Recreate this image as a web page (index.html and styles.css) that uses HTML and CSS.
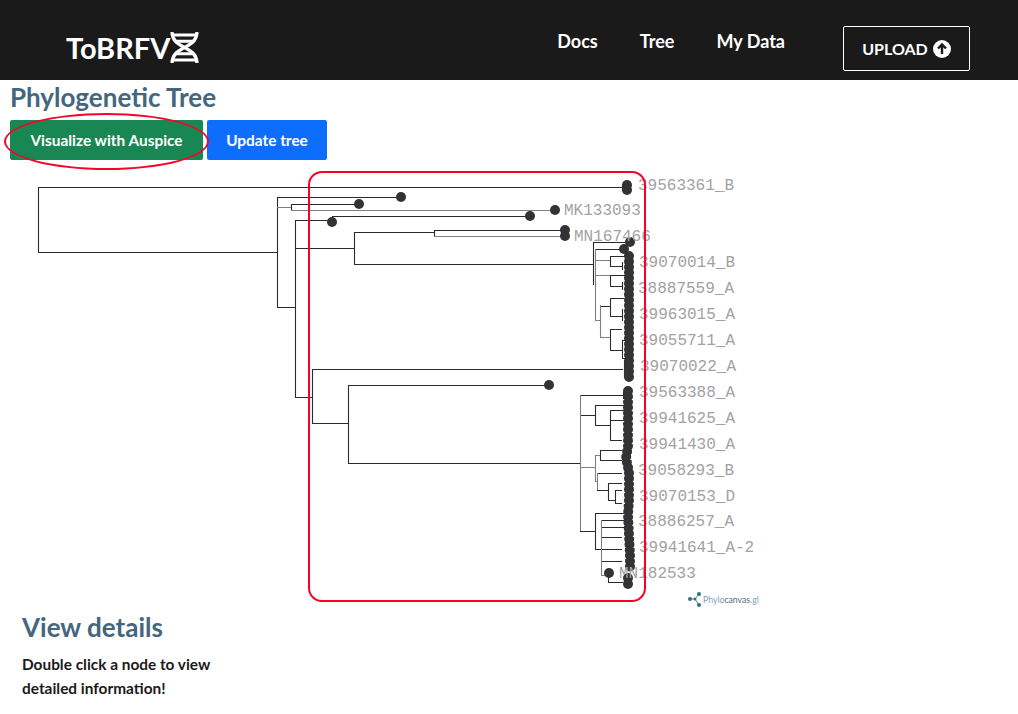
FILE: index.html
```html
<!DOCTYPE html>
<html lang="en">

<head>
  <meta charset="UTF-8">
  <meta name="viewport" content="width=device-width, initial-scale=1.0">
  <link rel="stylesheet" href="styles.css">
  <title>ToBRFV</title>
</head>

<body>
  <header class="topbar">
    <a class="brand" href="#">ToBRFV
      <svg class="brand-icon" viewBox="0 0 30 32" width="29" height="31" aria-hidden="true">
        <path d="M2 0c1 10 6 12 13 16s12 6 13 16" />
        <path d="M28 0c-1 10-6 12-13 16S3 22 2 32" />
        <path d="M2 3h26M6 9.500h18M6 22.500h18M2 29h26" class="rung" />
      </svg>
    </a>
    <nav class="nav">
      <a href="#">Docs</a>
      <a href="#">Tree</a>
      <a href="#">My Data</a>
    </nav>
    <a class="upload" href="#">UPLOAD
      <svg viewBox="0 0 18 18" width="18" height="18" aria-hidden="true">
        <circle cx="9" cy="9" r="9" fill="#fff" />
        <path d="M9 14V5M5 8.500 9 4.500l4 4" fill="none" stroke="#1b1a1a" stroke-width="2.400" />
      </svg>
    </a>
  </header>

  <main class="content">
    <h1>Phylogenetic Tree</h1>
    <div class="actions">
      <button class="btn btn-green" type="button">Visualize with Auspice</button>
      <button class="btn btn-blue" type="button">Update tree</button>
    </div>

    <!-- viewBox uses page coordinates so the branches are easy to read off -->
    <svg class="tree" viewBox="0 160 1018 450" width="1018" height="450" role="img" aria-label="Phylogenetic tree">
      <path class="branch" d="M38.500 187V252.500M38 187.500H622M622.500 184V191M38 252.500H277M277.500 197V307M277 307.500H295M277 197.500H401M291.500 204V210M291 204.500H359
        M295.500 220V397M295 220.500H332M332.500 216V222M332 216.500H530M295 248.500H354M354.500 232V264M354 232.500H434M434.500 230V236M434 230.500H565
        M354 264.500H594M593.500 242V285M593 242.500H630M596 249.500H624M610.500 256V266M610 256.500H625M622.500 262V270M610 266.500H622
        M610.500 275V286M610 275.500H625M622.500 282V290M610 286.500H622
        M600 306.500H610M610.500 298V316M610 298.500H624M610 316.500H622M622.500 309V321
        M610.500 329V350M610 329.500H622M610 350.500H622M622.500 340V358M622 340.500H627M622 358.500H627
        M312 369.500H623M624.500 360V378M312.500 369V423M295 397.500H312M312 423.500H348M348.500 385V463M348 385.500H549M348 463.500H580
        M580 395.500H623M623.500 392V399M580 415.500H595M595.500 405V425M595 405.500H625M595 425.500H610M610.500 410V440M610 410.500H625M610 420.500H625M610 440.500H622
        M600.500 450V460M600 450.500H622M600 460.500H622M597 473.500H622M608.500 483V500M597 490.500H608M608 483.500H622M608 500.500H615M615.500 490V503M615 490.500H622M615 503.500H622
        M580 531.500H595M595.500 513V549M595 513.500H625M595 549.500H622M601 520.500H625M601 527.500H625M601 537.500H622M601 561.500H622
        M608.500 573V582M608 582.500H623M624.500 576V585" />
      <path class="branch branch-light" d="M277 207.500H291M291 210.500H555M434 236.500H565M595.500 249V320M595 320.500H600M600.500 305V337M600 337.500H610M580.500 395V531M596 260.500H610M596 275.500H610M595 455.500H600M580 467.500H595M595.500 455V481M595 481.500H597M597.500 473V490M601.500 520V575M601 575.500H609" />

      <g class="nodes">
        <circle cx="401" cy="197" r="5" />
        <circle cx="359" cy="204" r="5" />
        <circle cx="555" cy="210" r="5" />
        <circle cx="530" cy="216" r="5" />
        <circle cx="332" cy="222" r="5" />
        <circle cx="565" cy="230" r="5" />
        <circle cx="565" cy="236" r="5" />
        <circle cx="549" cy="385" r="5" />
        <circle cx="627" cy="185" r="5" />
        <circle cx="627" cy="190" r="5" />
        <circle cx="630" cy="242" r="5" />
        <circle cx="624" cy="249" r="5" />
        <circle cx="609" cy="573" r="5" />
        <circle cx="628" cy="578" r="5" />
        <circle cx="628" cy="584" r="5" />
      </g>
      <path class="leaf-run" d="M629 256V382" />
      <path class="leaf-run" d="M628 391V446L626 458L629 472V500L628 515L630 555V568" />

      <g class="labels">
        <text x="638" y="190">39563361_B</text>
        <text x="564" y="215">MK133093</text>
        <text x="574" y="241">MN167466</text>
        <text x="639" y="267">39070014_B</text>
        <text x="638" y="293">38887559_A</text>
        <text x="639" y="319">39963015_A</text>
        <text x="639" y="345">39055711_A</text>
        <text x="640" y="371">39070022_A</text>
        <text x="639" y="397">39563388_A</text>
        <text x="639" y="423">39941625_A</text>
        <text x="639" y="449">39941430_A</text>
        <text x="638" y="475">39058293_B</text>
        <text x="639" y="501">39070153_D</text>
        <text x="638" y="526">38886257_A</text>
        <text x="639" y="552">39941641_A-2</text>
        <text x="619" y="578">MN182533</text>
      </g>

      <g class="pc-logo">
        <path d="M691 599H695L699 594M695 599L699 605" />
        <circle class="pc-dot" cx="690" cy="599" r="2" />
        <circle class="pc-dot" cx="699" cy="594" r="2" />
        <circle class="pc-dot" cx="699" cy="605" r="2" />
        <circle class="pc-dot" cx="695" cy="599" r="1.500" />
        <text x="703" y="603">Phylo<tspan class="pc-dark">canvas</tspan>.gl</text>
      </g>
    </svg>

    <section class="details">
      <h2>View details</h2>
      <p>Double click a node to view<br>detailed information!</p>
    </section>
  </main>

  <div class="mark mark-ellipse"></div>
  <div class="mark mark-box"></div>
</body>

</html>
```

FILE: styles.css
```css
body {
  font-family: "Lato", "Noto Sans", sans-serif;
  background-color: #fff;
  color: #1b1a1a;
  margin: 0;
  padding: 0;
  height: 714px;
  overflow: hidden;
  position: relative;
}

a {
  color: inherit;
  text-decoration: none;
}

.topbar {
  background-color: #1b1a1a;
  color: #fff;
  height: 80px;
  display: flex;
  align-items: center;
  padding: 0 48px 0 66px;
  box-sizing: border-box;
}

.brand {
  display: flex;
  align-items: center;
  font-size: 29px;
  font-weight: 700;
  margin-top: 15px;
}

.brand-icon {
  display: block;
  margin-top: -1px;
  fill: none;
  stroke: #fff;
  stroke-width: 3.500;
}

.brand-icon .rung {
  stroke-width: 3;
}

.nav {
  display: flex;
  gap: 42px;
  margin-left: auto;
  margin-top: 1px;
  margin-right: 58px;
  font-size: 18px;
  font-weight: 700;
}

.upload {
  width: 127px;
  height: 45px;
  margin-top: 17px;
  box-sizing: border-box;
  border: 1px solid #fff;
  border-radius: 2px;
  display: flex;
  align-items: center;
  justify-content: center;
  gap: 5px;
  font-size: 16px;
  font-weight: 700;
}

h1 {
  color: #44667e;
  font-size: 26px;
  line-height: 34px;
  margin: 0;
  padding-left: 10px;
}

.actions {
  display: flex;
  gap: 4px;
  padding: 6px 0 0 10px;
}

.btn {
  height: 40px;
  border: none;
  border-radius: 2px;
  color: #fff;
  font-family: inherit;
  font-size: 15.400px;
  font-weight: 700;
  padding: 0;
  cursor: pointer;
}

.btn-green {
  width: 193px;
  background-color: #198754;
}

.btn-blue {
  width: 120px;
  background-color: #0d6efd;
}

.tree {
  display: block;
}

.branch {
  fill: none;
  stroke: #2b2b2b;
  stroke-width: 1.100;
}

.branch-light {
  stroke: #808080;
}

.nodes {
  fill: #333;
}

/* leaves sit so close together that they read as one bumpy column */
.leaf-run {
  fill: none;
  stroke: #333;
  stroke-width: 10;
  stroke-linecap: round;
  stroke-dasharray: 0 5.500;
}

.labels text {
  font-family: "Liberation Mono", monospace;
  font-size: 16px;
  fill: #a2a2a2;
}

.pc-logo path {
  fill: none;
  stroke: #4a8a9a;
  stroke-width: 1;
}

.pc-dot {
  fill: #2f6f86;
}

.pc-logo text {
  font-family: "Lato", sans-serif;
  font-size: 8.700px;
  fill: #7d9fb5;
}

.pc-dark {
  fill: #4a6f85;
}

.details {
  padding-left: 22px;
}

h2 {
  color: #44667e;
  font-size: 26px;
  line-height: 34px;
  margin: 0;
}

.details p {
  font-size: 15.400px;
  font-weight: 700;
  line-height: 24px;
  margin: 8px 0 0;
}

/* red annotations drawn over the screenshot */
.mark {
  position: absolute;
  box-sizing: border-box;
  pointer-events: none;
}

.mark-ellipse {
  left: 4px;
  top: 113px;
  width: 205px;
  height: 57px;
  border: 2px solid #f2062a;
  border-radius: 50%;
}

.mark-box {
  left: 308px;
  top: 171px;
  width: 338px;
  height: 431px;
  border: 2px solid #fa0026;
  border-radius: 14px;
}
```
